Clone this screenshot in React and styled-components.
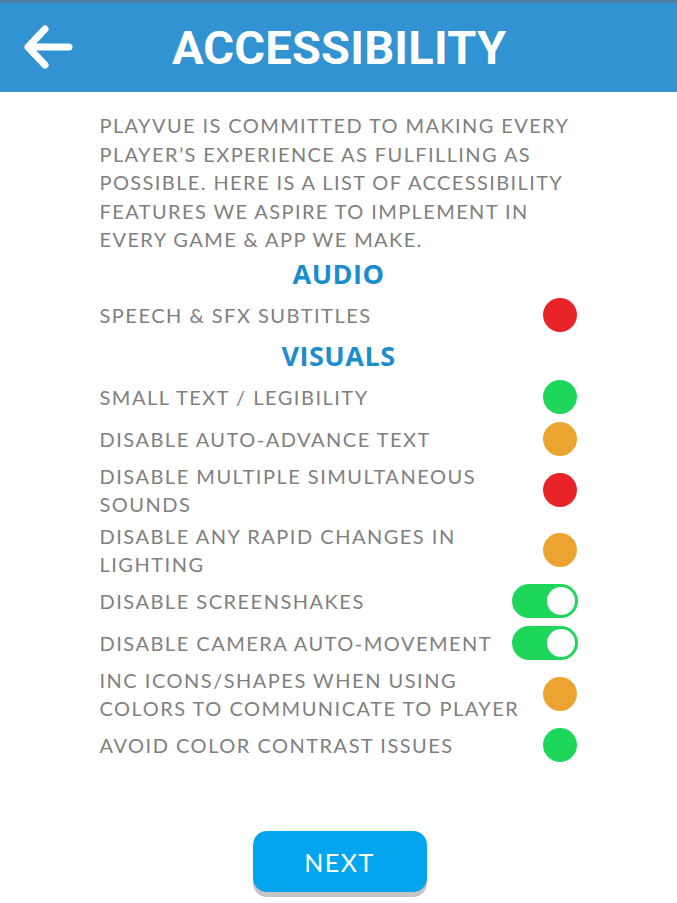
import React from 'react'
import styled, { createGlobalStyle } from 'styled-components'

const GlobalStyle = createGlobalStyle`
  html, body {
    margin: 0;
    padding: 0;
    background: #ffffff;
  }
`

const audio = [
  { label: 'SPEECH & SFX SUBTITLES', kind: 'red' },
]

const visuals = [
  { label: 'SMALL TEXT / LEGIBILITY', kind: 'green' },
  { label: 'DISABLE AUTO-ADVANCE TEXT', kind: 'orange' },
  { label: 'DISABLE MULTIPLE SIMULTANEOUS SOUNDS', kind: 'red' },
  { label: 'DISABLE ANY RAPID CHANGES IN LIGHTING', kind: 'orange' },
  { label: 'DISABLE SCREENSHAKES', kind: 'toggle' },
  { label: 'DISABLE CAMERA AUTO-MOVEMENT', kind: 'toggle' },
  { label: 'INC ICONS/SHAPES WHEN USING COLORS TO COMMUNICATE TO PLAYER', kind: 'orange' },
  { label: 'AVOID COLOR CONTRAST ISSUES', kind: 'green' },
]

const dotColors = {
  red: '#e92429',
  green: '#1ed65a',
  orange: '#eca431',
}

export default function App() {
  const renderRow = (item) => (
    <Row key={item.label}>
      <Label>{item.label}</Label>
      {item.kind === 'toggle' ? (
        <Toggle><Knob /></Toggle>
      ) : (
        <Dot color={dotColors[item.kind]} />
      )}
    </Row>
  )

  return (
    <Page>
      <GlobalStyle />
      <Header>
        <BackBtn>
          <svg width="52" height="46" viewBox="0 0 52 46">
            <path d="M22 5 L5 23 L22 41 M5 23 L46 23" fill="none" stroke="#fff" strokeWidth="7" strokeLinecap="round" strokeLinejoin="round" />
          </svg>
        </BackBtn>
        <Title>ACCESSIBILITY</Title>
      </Header>
      <Content>
        <Intro>
          PLAYVUE IS COMMITTED TO MAKING EVERY PLAYER’S EXPERIENCE AS FULFILLING AS POSSIBLE. HERE IS A LIST OF ACCESSIBILITY FEATURES WE ASPIRE TO IMPLEMENT IN EVERY GAME &amp; APP WE MAKE.
        </Intro>
        <Section>AUDIO</Section>
        <List>{audio.map(renderRow)}</List>
        <Section>VISUALS</Section>
        <List>{visuals.map(renderRow)}</List>
      </Content>
      <Footer>
        <NextBtn>NEXT</NextBtn>
      </Footer>
    </Page>
  )
}

const Page = styled.div`
  width: 677px;
  height: 903px;
  display: flex;
  flex-direction: column;
  font-family: Lato, "Open Sans", sans-serif;
  overflow: hidden;
`

const Header = styled.div`
  height: 89px;
  background: #3193d2;
  border-top: 3px solid #4f7fa2;
  display: flex;
  align-items: center;
`

const BackBtn = styled.div`
  width: 52px;
  height: 46px;
  margin-left: 23px;
  margin-top: -2px;
  display: flex;
`

const Title = styled.h1`
  margin: 0 0 0 97px;
  color: #ffffff;
  font-family: Roboto, "Liberation Sans", sans-serif;
  font-weight: 700;
  font-size: 47px;
  letter-spacing: 0.2px;
`

const Content = styled.div`
  width: 478px;
  margin: 0 auto;
  padding-top: 19px;
  display: flex;
  flex-direction: column;
`

const Intro = styled.p`
  margin: 0;
  color: #808080;
  font-size: 20px;
  line-height: 28.5px;
  letter-spacing: 1.4px;
`

const Section = styled.h2`
  margin: 4px 0 0;
  text-align: center;
  color: #1a8dcd;
  font-family: "Open Sans", sans-serif;
  font-weight: 700;
  font-size: 27px;
  line-height: 32px;
  letter-spacing: 0.5px;
`

const List = styled.div`
  display: flex;
  flex-direction: column;
  gap: 8px;
  padding: 8px 0 4px;
`

const Row = styled.div`
  display: flex;
  align-items: center;
  justify-content: space-between;
  min-height: 34px;
`

const Label = styled.div`
  max-width: 440px;
  margin: -2px 0;
  color: #808080;
  font-size: 20px;
  line-height: 28px;
  letter-spacing: 1.5px;
`

const Dot = styled.div`
  width: 34px;
  height: 34px;
  border-radius: 50%;
  background: ${(p) => p.color};
  margin-right: 1px;
  flex-shrink: 0;
`

const Toggle = styled.div`
  width: 66px;
  height: 34px;
  border-radius: 17px;
  background: #1ed65a;
  display: flex;
  align-items: center;
  justify-content: flex-end;
  padding-right: 3px;
  box-sizing: border-box;
  flex-shrink: 0;
`

const Knob = styled.div`
  width: 28px;
  height: 28px;
  border-radius: 50%;
  background: #ffffff;
`

const Footer = styled.div`
  margin-top: auto;
  padding-bottom: 11px;
  display: flex;
  justify-content: center;
`

const NextBtn = styled.button`
  width: 174px;
  height: 61px;
  border: none;
  border-radius: 14px;
  background: #03a6ee;
  box-shadow: 0 5px 0 #c4c4c4;
  color: #ffffff;
  font-family: Lato, sans-serif;
  font-size: 25px;
  letter-spacing: 1.5px;
  margin-left: 2px;
`
